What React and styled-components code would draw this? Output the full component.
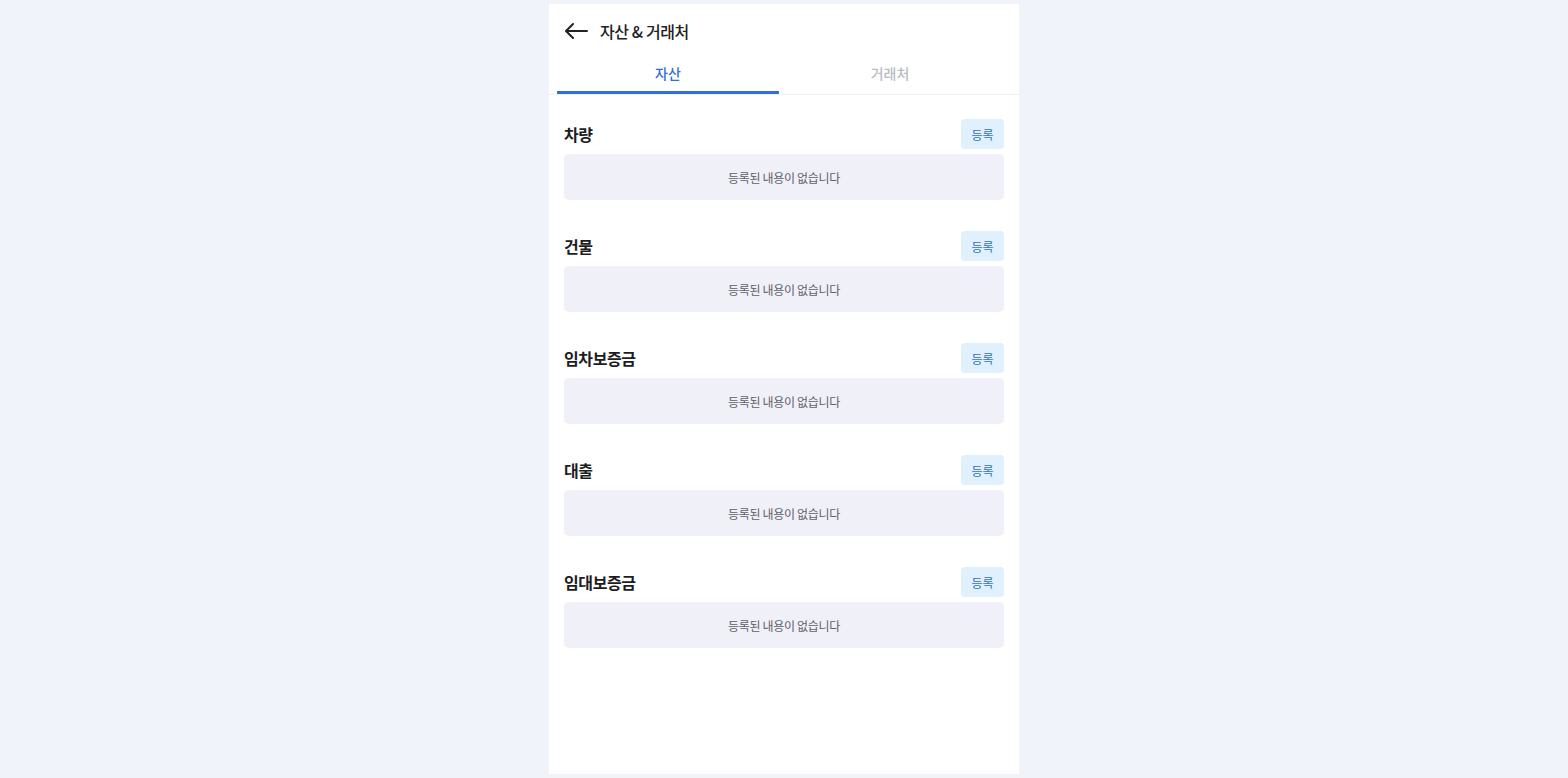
import styled, { createGlobalStyle } from "styled-components";
import { useState } from "react";

const GlobalStyle = createGlobalStyle`
  html, body {
    margin: 0;
    padding: 0;
    background: #f0f3fa;
    font-family: "Noto Sans CJK KR", "Noto Sans", sans-serif;
  }
`;

const Page = styled.div`
  width: 470px;
  height: 770px;
  margin: 4px auto 0;
  background: #fff;
  display: flex;
  flex-direction: column;
`;

const Header = styled.div`
  height: 54px;
  display: flex;
  align-items: center;
  gap: 11px;
  padding: 0 16px;
  box-sizing: border-box;
`;

const BackButton = styled.button`
  border: none;
  background: none;
  padding: 0;
  display: flex;
  cursor: pointer;
  color: #222;
`;

const Title = styled.h1`
  margin: 0;
  font-size: 16px;
  font-weight: 500;
  color: #222;
  letter-spacing: -0.4px;
`;

const TabBar = styled.div`
  display: flex;
  padding-left: 8px;
  border-bottom: 1px solid #eef0f4;
`;

const Tab = styled.button`
  width: 222px;
  height: 36px;
  border: none;
  background: none;
  font-family: inherit;
  font-size: 14px;
  font-weight: 500;
  color: ${(p) => (p.active ? "#2f6fd6" : "#b8bcc6")};
  border-bottom: 3px solid ${(p) => (p.active ? "#2f6fd6" : "transparent")};
  padding: 0 0 4px;
  cursor: pointer;
`;

const List = styled.div`
  padding: 24px 15px 0;
  display: flex;
  flex-direction: column;
  gap: 31px;
`;

const Section = styled.section`
  display: flex;
  flex-direction: column;
  gap: 5px;
`;

const SectionHead = styled.div`
  display: flex;
  justify-content: space-between;
  align-items: center;
  height: 30px;
`;

const SectionTitle = styled.h2`
  margin: 0;
  font-size: 16px;
  font-weight: 700;
  color: #1d1d1f;
  letter-spacing: -0.4px;
`;

const AddButton = styled.button`
  width: 43px;
  height: 30px;
  border: none;
  border-radius: 4px;
  background: #e1f0fd;
  color: #2f6fd0;
  font-family: inherit;
  font-size: 12px;
  padding: 0;
  cursor: pointer;
`;

const Empty = styled.div`
  height: 46px;
  border-radius: 5px;
  background: #f0f1f8;
  display: flex;
  align-items: center;
  justify-content: center;
  font-size: 12px;
  letter-spacing: -0.3px;
  color: #5f6066;
`;

const sections = ["차량", "건물", "임차보증금", "대출", "임대보증금"];

const App = () => {
  const [tab, setTab] = useState(0);
  return (
    <>
      <GlobalStyle />
      <Page>
        <Header>
          <BackButton aria-label="뒤로">
            <svg width="24" height="24" viewBox="0 0 24 24" fill="none" stroke="currentColor" strokeWidth="2" strokeLinecap="round" strokeLinejoin="round">
              <path d="M22 12H2" />
              <path d="M8 5l-7 7 7 7" />
            </svg>
          </BackButton>
          <Title>자산 &amp; 거래처</Title>
        </Header>
        <TabBar>
          <Tab active={tab === 0} onClick={() => setTab(0)}>자산</Tab>
          <Tab active={tab === 1} onClick={() => setTab(1)}>거래처</Tab>
        </TabBar>
        <List>
          {sections.map((name) => (
            <Section key={name}>
              <SectionHead>
                <SectionTitle>{name}</SectionTitle>
                <AddButton>등록</AddButton>
              </SectionHead>
              <Empty>등록된 내용이 없습니다</Empty>
            </Section>
          ))}
        </List>
      </Page>
    </>
  );
};

export default App;
